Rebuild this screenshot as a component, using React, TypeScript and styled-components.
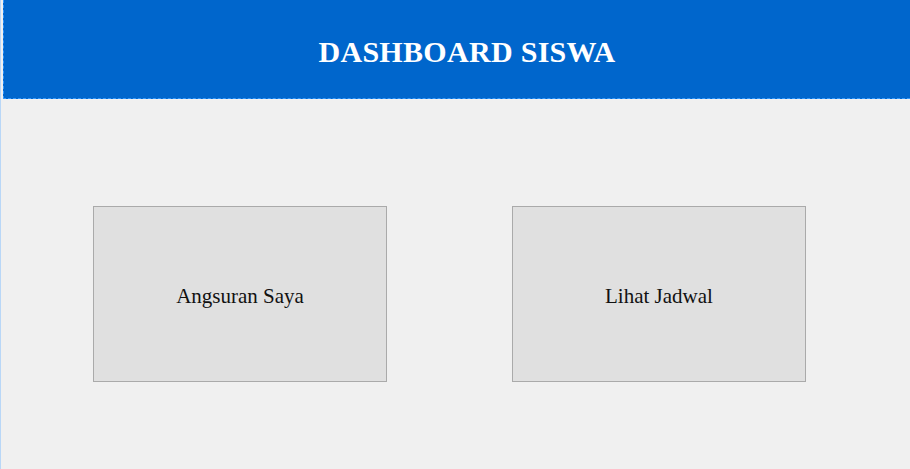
import React from "react";
import styled, { createGlobalStyle } from "styled-components";

const Global = createGlobalStyle`
  html, body { margin: 0; padding: 0; background: #f0f0f0; }
  #root { height: 469px; }
`;

const Window = styled.div`
  height: 469px;
  box-sizing: border-box;
  border-left: 1px solid #b9d7f7;
  padding-left: 2px;
  background: #f0f0f0;
  display: flex;
  flex-direction: column;
  overflow: hidden;
`;

const Header = styled.header`
  height: 99px;
  box-sizing: border-box;
  background: #0066cc;
  border-left: 1px dashed #3399ff;
  border-bottom: 1px dashed #3399ff;
  display: flex;
  align-items: center;
  justify-content: center;
  padding: 6px 0 0 20px;
`;

const Title = styled.h1`
  margin: 0;
  color: #ffffff;
  font-family: "Liberation Serif", "DejaVu Serif", serif;
  font-weight: 700;
  font-size: 30px;
  letter-spacing: 0.3px;
`;

const Row = styled.main`
  display: flex;
  padding: 107px 0 0 90px;
  gap: 125px;
`;

const Tile = styled.button`
  width: 294px;
  height: 176px;
  box-sizing: border-box;
  background: #e0e0e0;
  border: 1px solid #aaaaaa;
  display: flex;
  align-items: center;
  justify-content: center;
  padding: 0;
  font-family: "Liberation Serif", "DejaVu Serif", serif;
  font-size: 21px;
  color: #111111;
  cursor: pointer;
`;

const TileLabel = styled.span`
  margin-top: 4px;
`;

export default function App() {
  return (
    <>
      <Global />
      <Window>
        <Header>
          <Title>DASHBOARD SISWA</Title>
        </Header>
        <Row>
          <Tile>
            <TileLabel>Angsuran Saya</TileLabel>
          </Tile>
          <Tile>
            <TileLabel>Lihat Jadwal</TileLabel>
          </Tile>
        </Row>
      </Window>
    </>
  );
}
